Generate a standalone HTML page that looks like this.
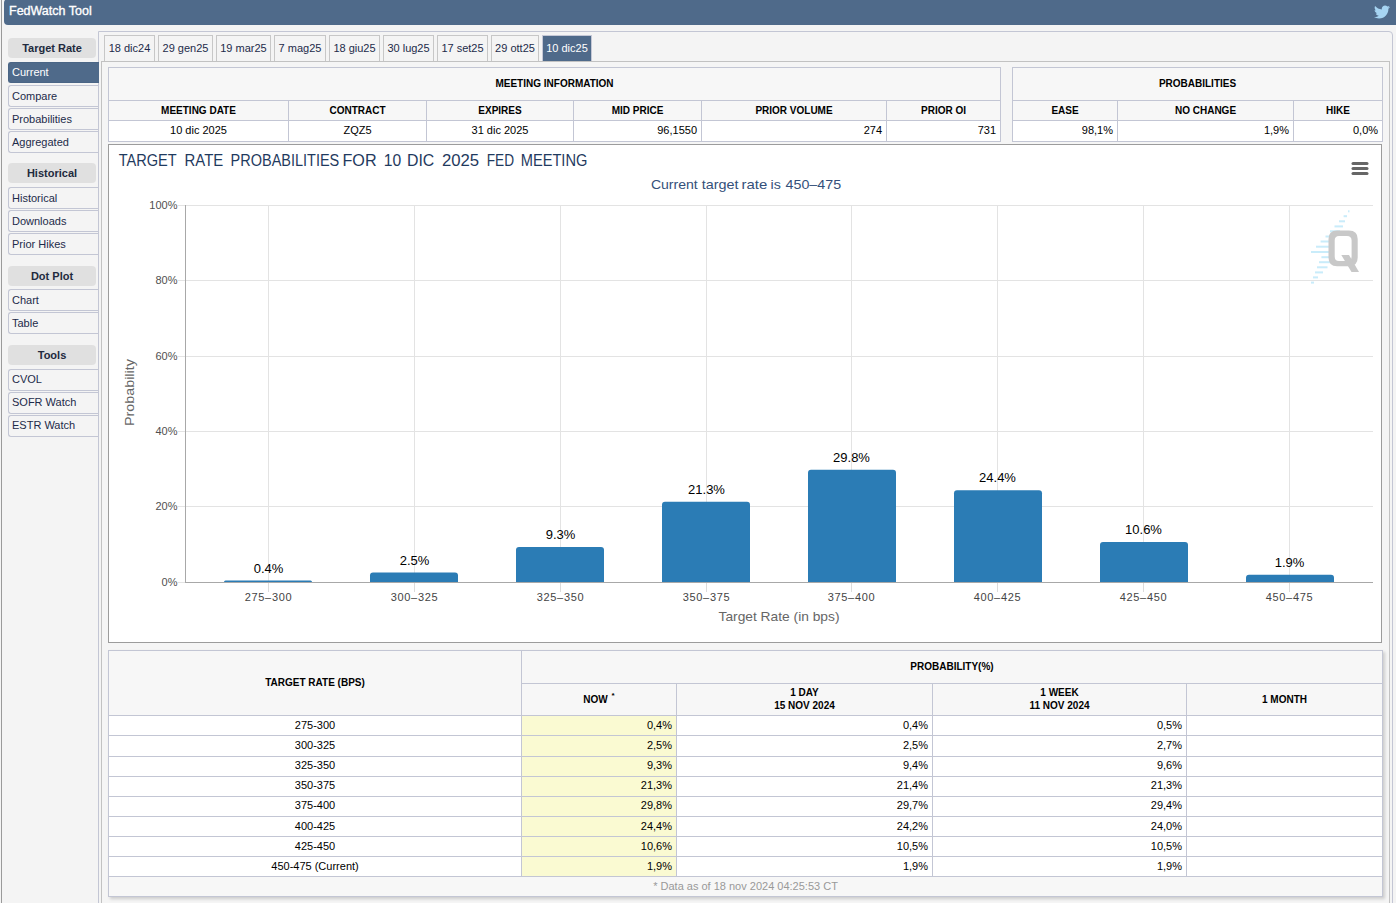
<!DOCTYPE html>
<html><head><meta charset="utf-8">
<style>
*{box-sizing:border-box;margin:0;padding:0}
html,body{width:1396px;height:903px;overflow:hidden;background:#f4f4f4;font-family:"Liberation Sans",sans-serif;position:relative}
.abs{position:absolute}
#lline{left:1px;top:0;width:1px;height:903px;background:#9a9a9a}
#hdr{left:4px;top:-1px;width:1396px;height:26px;background:#4f6a8a;border-radius:4px;color:#fff;font-size:12.5px;padding:5px 0 0 5px;-webkit-text-stroke:0.35px #fff}
#tw{left:1374px;top:3.5px}
/* sidebar */
.sh{position:absolute;left:8px;width:88px;height:20px;background:#e0e0e0;border-radius:4px;font-weight:bold;font-size:11px;color:#222a3e;text-align:center;line-height:20px}
.si{position:absolute;left:8px;width:91px;height:22px;background:#f4f4f4;border:1px solid #c3c6d4;border-right:none;border-radius:3px 0 0 3px;font-size:11px;color:#1d2b4a;padding-left:3px;line-height:20px}
.si.act{background:#4f6a8a;color:#fff;border-color:#4a6585;height:21px;line-height:19px;z-index:3;width:91px}
/* panel */
#outer{left:98px;top:31px;width:1295px;height:900px;border:1px solid #c3c6d4;border-radius:0 4px 0 0;background:#f4f4f4}
#inner{left:101px;top:61px;width:1289px;height:900px;border:1px solid #c2c2c2;background:#f5f5f5}
.tab{position:absolute;top:35px;height:26px;border:1px solid #c7c7c7;border-bottom:none;background:#f4f4f4;font-size:11px;color:#1d2b4a;text-align:center;line-height:25px}
.tab.act{background:#4f6a8a;color:#fff;border:1px solid #c5c8d6;border-bottom:none}
table{border-collapse:collapse;position:absolute;table-layout:fixed;background:#fff}
td,th{border:1px solid #c3c6d4;font-size:11px;color:#000;padding:0 4px;overflow:hidden;white-space:nowrap}
th{background:#f7f7f7;font-size:10px;font-weight:bold;text-align:center}
td{text-align:right;padding-bottom:2px}
td.c{text-align:center}
td.now{background:#fafad2}
th.two{line-height:12.6px}
th.now2{padding-bottom:4px}
th.t1{padding-bottom:2px}
tr.up td{padding-bottom:3px}
sup{font-size:8px;vertical-align:5px;margin-left:1px}
td.foot{background:#f7f7f7;color:#999;text-align:center}
#bt{box-shadow:2px 2px 3px rgba(0,0,0,.17)}
#chart{left:108px;top:144px;width:1274px;height:499px;border:1px solid #9c9c9c;background:#fff}
</style></head><body>
<div id="lline" class="abs"></div>
<div id="hdr" class="abs">FedWatch Tool</div>

<div class="sh" style="top:38px">Target Rate</div>
<div class="si act" style="top:62px">Current</div>
<div class="si" style="top:85px">Compare</div>
<div class="si" style="top:108px">Probabilities</div>
<div class="si" style="top:131px">Aggregated</div>
<div class="sh" style="top:163px">Historical</div>
<div class="si" style="top:187px">Historical</div>
<div class="si" style="top:210px">Downloads</div>
<div class="si" style="top:233px">Prior Hikes</div>
<div class="sh" style="top:266px">Dot Plot</div>
<div class="si" style="top:289px">Chart</div>
<div class="si" style="top:312px">Table</div>
<div class="sh" style="top:345px">Tools</div>
<div class="si" style="top:369px;line-height:18.5px">CVOL</div>
<div class="si" style="top:392px;line-height:18.5px">SOFR Watch</div>
<div class="si" style="top:415px;line-height:18.5px">ESTR Watch</div>

<div id="outer" class="abs"></div>
<div class="tab" style="left:104px;width:51px">18 dic24</div>
<div class="tab" style="left:158px;width:55px">29 gen25</div>
<div class="tab" style="left:216px;width:55px">19 mar25</div>
<div class="tab" style="left:274px;width:52px">7 mag25</div>
<div class="tab" style="left:329px;width:51px">18 giu25</div>
<div class="tab" style="left:383px;width:51px">30 lug25</div>
<div class="tab" style="left:437px;width:51px">17 set25</div>
<div class="tab" style="left:491px;width:48px">29 ott25</div>
<div class="tab act" style="left:542px;width:50px">10 dic25</div>
<div id="inner" class="abs"></div>

<!-- meeting info table -->
<table style="left:108px;top:67px;width:893px">
<colgroup><col style="width:180px"><col style="width:138px"><col style="width:147px"><col style="width:128px"><col style="width:185px"><col style="width:114px"></colgroup>
<tr style="height:33px"><th class="t1" colspan="6">MEETING INFORMATION</th></tr>
<tr style="height:20px"><th>MEETING DATE</th><th>CONTRACT</th><th>EXPIRES</th><th>MID PRICE</th><th>PRIOR VOLUME</th><th>PRIOR OI</th></tr>
<tr style="height:21px"><td class="c">10 dic 2025</td><td class="c">ZQZ5</td><td class="c">31 dic 2025</td><td>96,1550</td><td>274</td><td>731</td></tr>
</table>

<table style="left:1012px;top:67px;width:371px">
<colgroup><col style="width:105px"><col style="width:176px"><col style="width:89px"></colgroup>
<tr style="height:33px"><th class="t1" colspan="3">PROBABILITIES</th></tr>
<tr style="height:20px"><th>EASE</th><th>NO CHANGE</th><th>HIKE</th></tr>
<tr style="height:21px"><td>98,1%</td><td>1,9%</td><td>0,0%</td></tr>
</table>

<div id="chart" class="abs"></div>
<!--CHART-->
<svg class="abs" style="left:0;top:0;font-family:'Liberation Sans',sans-serif" width="1396" height="903">
<text x="118.7" y="166" fill="#1f3a5e" font-size="16" textLength="58.0" lengthAdjust="spacingAndGlyphs">TARGET</text>
<text x="184.6" y="166" fill="#1f3a5e" font-size="16" textLength="38.7" lengthAdjust="spacingAndGlyphs">RATE</text>
<text x="230.6" y="166" fill="#1f3a5e" font-size="16" textLength="108.7" lengthAdjust="spacingAndGlyphs">PROBABILITIES</text>
<text x="342.5" y="166" fill="#1f3a5e" font-size="16" textLength="34.1" lengthAdjust="spacingAndGlyphs">FOR</text>
<text x="383.7" y="166" fill="#1f3a5e" font-size="16" textLength="17.4" lengthAdjust="spacingAndGlyphs">10</text>
<text x="407.0" y="166" fill="#1f3a5e" font-size="16" textLength="27.3" lengthAdjust="spacingAndGlyphs">DIC</text>
<text x="441.9" y="166" fill="#1f3a5e" font-size="16" textLength="37.2" lengthAdjust="spacingAndGlyphs">2025</text>
<text x="486.7" y="166" fill="#1f3a5e" font-size="16" textLength="27.3" lengthAdjust="spacingAndGlyphs">FED</text>
<text x="520.7" y="166" fill="#1f3a5e" font-size="16" textLength="66.7" lengthAdjust="spacingAndGlyphs">MEETING</text>
<text x="650.9" y="188.6" fill="#34507a" font-size="13" textLength="46.9" lengthAdjust="spacingAndGlyphs">Current</text>
<text x="701.8" y="188.6" fill="#34507a" font-size="13" textLength="36.8" lengthAdjust="spacingAndGlyphs">target</text>
<text x="741.6" y="188.6" fill="#34507a" font-size="13" textLength="25.7" lengthAdjust="spacingAndGlyphs">rate</text>
<text x="770.6" y="188.6" fill="#34507a" font-size="13" textLength="10.3" lengthAdjust="spacingAndGlyphs">is</text>
<text x="785.6" y="188.6" fill="#34507a" font-size="13" textLength="55.5" lengthAdjust="spacingAndGlyphs">450–475</text>
<line x1="178" y1="205.5" x2="1373" y2="205.5" stroke="#e3e3e3"/>
<line x1="178" y1="280.5" x2="1373" y2="280.5" stroke="#e3e3e3"/>
<line x1="178" y1="356.5" x2="1373" y2="356.5" stroke="#e3e3e3"/>
<line x1="178" y1="431.5" x2="1373" y2="431.5" stroke="#e3e3e3"/>
<line x1="178" y1="506.5" x2="1373" y2="506.5" stroke="#e3e3e3"/>
<text x="177.5" y="208.8" fill="#505050" font-size="11" text-anchor="end">100%</text>
<text x="177.5" y="283.8" fill="#505050" font-size="11" text-anchor="end">80%</text>
<text x="177.5" y="359.8" fill="#505050" font-size="11" text-anchor="end">60%</text>
<text x="177.5" y="434.8" fill="#505050" font-size="11" text-anchor="end">40%</text>
<text x="177.5" y="509.8" fill="#505050" font-size="11" text-anchor="end">20%</text>
<text x="177.5" y="585.8" fill="#505050" font-size="11" text-anchor="end">0%</text>
<line x1="178" y1="582.5" x2="185" y2="582.5" stroke="#e3e3e3"/>
<line x1="268.5" y1="205" x2="268.5" y2="582" stroke="#e3e3e3"/>
<line x1="414.5" y1="205" x2="414.5" y2="582" stroke="#e3e3e3"/>
<line x1="560.5" y1="205" x2="560.5" y2="582" stroke="#e3e3e3"/>
<line x1="706.5" y1="205" x2="706.5" y2="582" stroke="#e3e3e3"/>
<line x1="851.5" y1="205" x2="851.5" y2="582" stroke="#e3e3e3"/>
<line x1="997.5" y1="205" x2="997.5" y2="582" stroke="#e3e3e3"/>
<line x1="1143.5" y1="205" x2="1143.5" y2="582" stroke="#e3e3e3"/>
<line x1="1289.5" y1="205" x2="1289.5" y2="582" stroke="#e3e3e3"/>
<line x1="268.5" y1="582" x2="268.5" y2="592" stroke="#dcdcdc"/>
<line x1="414.5" y1="582" x2="414.5" y2="592" stroke="#dcdcdc"/>
<line x1="560.5" y1="582" x2="560.5" y2="592" stroke="#dcdcdc"/>
<line x1="706.5" y1="582" x2="706.5" y2="592" stroke="#dcdcdc"/>
<line x1="851.5" y1="582" x2="851.5" y2="592" stroke="#dcdcdc"/>
<line x1="997.5" y1="582" x2="997.5" y2="592" stroke="#dcdcdc"/>
<line x1="1143.5" y1="582" x2="1143.5" y2="592" stroke="#dcdcdc"/>
<line x1="1289.5" y1="582" x2="1289.5" y2="592" stroke="#dcdcdc"/>
<line x1="185.5" y1="205" x2="185.5" y2="582" stroke="#a8a8a8"/>
<path d="M224 582 V582.00 Q224 580.49 225.506 580.49 H310.494 Q312 580.49 312 582.00 V582 Z" fill="#2b7cb5"/>
<text x="268.5" y="572.5" fill="#000" font-size="13" text-anchor="middle">0.4%</text>
<text x="268.5" y="601" fill="#444" font-size="11" letter-spacing="0.7" text-anchor="middle">275–300</text>
<path d="M370 582 V575.59 Q370 572.59 373 572.59 H455 Q458 572.59 458 575.59 V582 Z" fill="#2b7cb5"/>
<text x="414.5" y="564.6" fill="#000" font-size="13" text-anchor="middle">2.5%</text>
<text x="414.5" y="601" fill="#444" font-size="11" letter-spacing="0.7" text-anchor="middle">300–325</text>
<path d="M516 582 V549.99 Q516 546.99 519 546.99 H601 Q604 546.99 604 549.99 V582 Z" fill="#2b7cb5"/>
<text x="560.5" y="539.0" fill="#000" font-size="13" text-anchor="middle">9.3%</text>
<text x="560.5" y="601" fill="#444" font-size="11" letter-spacing="0.7" text-anchor="middle">325–350</text>
<path d="M662 582 V504.81 Q662 501.81 665 501.81 H747 Q750 501.81 750 504.81 V582 Z" fill="#2b7cb5"/>
<text x="706.5" y="493.8" fill="#000" font-size="13" text-anchor="middle">21.3%</text>
<text x="706.5" y="601" fill="#444" font-size="11" letter-spacing="0.7" text-anchor="middle">350–375</text>
<path d="M808 582 V472.80 Q808 469.80 811 469.80 H893 Q896 469.80 896 472.80 V582 Z" fill="#2b7cb5"/>
<text x="851.5" y="461.8" fill="#000" font-size="13" text-anchor="middle">29.8%</text>
<text x="851.5" y="601" fill="#444" font-size="11" letter-spacing="0.7" text-anchor="middle">375–400</text>
<path d="M954 582 V493.13 Q954 490.13 957 490.13 H1039 Q1042 490.13 1042 493.13 V582 Z" fill="#2b7cb5"/>
<text x="997.5" y="482.1" fill="#000" font-size="13" text-anchor="middle">24.4%</text>
<text x="997.5" y="601" fill="#444" font-size="11" letter-spacing="0.7" text-anchor="middle">400–425</text>
<path d="M1100 582 V545.09 Q1100 542.09 1103 542.09 H1185 Q1188 542.09 1188 545.09 V582 Z" fill="#2b7cb5"/>
<text x="1143.5" y="534.1" fill="#000" font-size="13" text-anchor="middle">10.6%</text>
<text x="1143.5" y="601" fill="#444" font-size="11" letter-spacing="0.7" text-anchor="middle">425–450</text>
<path d="M1246 582 V577.85 Q1246 574.85 1249 574.85 H1331 Q1334 574.85 1334 577.85 V582 Z" fill="#2b7cb5"/>
<text x="1289.5" y="566.8" fill="#000" font-size="13" text-anchor="middle">1.9%</text>
<text x="1289.5" y="601" fill="#444" font-size="11" letter-spacing="0.7" text-anchor="middle">450–475</text>
<line x1="185" y1="582.5" x2="1373" y2="582.5" stroke="#a8a8a8"/>
<text x="779" y="620.5" fill="#666" font-size="13.5" textLength="121" lengthAdjust="spacingAndGlyphs" text-anchor="middle">Target Rate (in bps)</text>
<text transform="translate(134.3 392.6) rotate(-90)" fill="#666" font-size="13.5" textLength="67" lengthAdjust="spacingAndGlyphs" text-anchor="middle">Probability</text>
<line x1="1353" y1="163.5" x2="1367" y2="163.5" stroke="#666" stroke-width="3" stroke-linecap="round"/>
<line x1="1353" y1="168.5" x2="1367" y2="168.5" stroke="#666" stroke-width="3" stroke-linecap="round"/>
<line x1="1353" y1="173.5" x2="1367" y2="173.5" stroke="#666" stroke-width="3" stroke-linecap="round"/>
<rect x="1348" y="210.3" width="1.5" height="2" fill="#c9ecfa"/>
<rect x="1343.6" y="215.2" width="3.400000000000091" height="2" fill="#c9ecfa"/>
<rect x="1339" y="220.3" width="6" height="2" fill="#c9ecfa"/>
<rect x="1334.5" y="225.4" width="8.5" height="2" fill="#c9ecfa"/>
<rect x="1330" y="230.3" width="10" height="2" fill="#c9ecfa"/>
<rect x="1325.5" y="235.5" width="5.5" height="2" fill="#c9ecfa"/>
<rect x="1320.6" y="240.5" width="10.400000000000091" height="2" fill="#c9ecfa"/>
<rect x="1316" y="245.7" width="15" height="2" fill="#c9ecfa"/>
<rect x="1311" y="251" width="20" height="2" fill="#c9ecfa"/>
<rect x="1321.4" y="256.2" width="9.599999999999909" height="2" fill="#c9ecfa"/>
<rect x="1319" y="261.2" width="12" height="2" fill="#c9ecfa"/>
<rect x="1317" y="266.3" width="10.5" height="2" fill="#c9ecfa"/>
<rect x="1315" y="271.4" width="8" height="2" fill="#c9ecfa"/>
<rect x="1313" y="276.4" width="5" height="2" fill="#c9ecfa"/>
<rect x="1311" y="281.6" width="3" height="2" fill="#c9ecfa"/>
<path fill="#c8c8c8" fill-rule="evenodd" d="M1337 230.5 H1349 Q1357.7 230.5 1357.7 239 V257.5 Q1357.7 266.2 1349 266.2 H1337 Q1328.5 266.2 1328.5 257.5 V239 Q1328.5 230.5 1337 230.5 Z M1339 236 Q1334.7 236 1334.7 240.5 V256.5 Q1334.7 261 1339 261 H1347 Q1351.6 261 1351.6 256.5 V240.5 Q1351.6 236 1347 236 Z"/>
<path fill="#c8c8c8" d="M1341.3 255 H1349 L1359 271.9 H1351.5 Z"/>
</svg>
<!--/CHART-->
<table id="bt" style="left:108px;top:650px;width:1274px">
<colgroup><col style="width:413px"><col style="width:155px"><col style="width:256px"><col style="width:254px"><col style="width:196px"></colgroup>
<tr style="height:33px"><th class="t1" rowspan="2">TARGET RATE (BPS)</th><th class="t1" colspan="4">PROBABILITY(%)</th></tr>
<tr style="height:32px"><th class="now2">NOW <sup>*</sup></th><th class="two">1 DAY<br>15 NOV 2024</th><th class="two">1 WEEK<br>11 NOV 2024</th><th>1 MONTH</th></tr>
<tr style="height:20px"><td class="c">275-300</td><td class="now">0,4%</td><td>0,4%</td><td>0,5%</td><td></td></tr>
<tr style="height:21px"><td class="c">300-325</td><td class="now">2,5%</td><td>2,5%</td><td>2,7%</td><td></td></tr>
<tr class="up" style="height:20px"><td class="c">325-350</td><td class="now">9,3%</td><td>9,4%</td><td>9,6%</td><td></td></tr>
<tr class="up" style="height:20px"><td class="c">350-375</td><td class="now">21,3%</td><td>21,4%</td><td>21,3%</td><td></td></tr>
<tr class="up" style="height:20px"><td class="c">375-400</td><td class="now">29,8%</td><td>29,7%</td><td>29,4%</td><td></td></tr>
<tr style="height:20px"><td class="c">400-425</td><td class="now">24,4%</td><td>24,2%</td><td>24,0%</td><td></td></tr>
<tr style="height:20px"><td class="c">425-450</td><td class="now">10,6%</td><td>10,5%</td><td>10,5%</td><td></td></tr>
<tr style="height:20px"><td class="c">450-475 (Current)</td><td class="now">1,9%</td><td>1,9%</td><td>1,9%</td><td></td></tr>
<tr style="height:20px"><td colspan="5" class="foot">* Data as of 18 nov 2024 04:25:53 CT</td></tr>
</table>
<svg id="tw" class="abs" viewBox="0 0 24 24" width="16" height="16"><path fill="#a6d4f2" d="M23.954 4.569c-.885.389-1.83.654-2.825.775 1.014-.611 1.794-1.574 2.163-2.723-.951.555-2.005.959-3.127 1.184-.896-.959-2.173-1.559-3.591-1.559-2.717 0-4.92 2.203-4.92 4.917 0 .39.045.765.127 1.124C7.691 8.094 4.066 6.13 1.64 3.161c-.427.722-.666 1.561-.666 2.475 0 1.71.87 3.213 2.188 4.096-.807-.026-1.566-.248-2.228-.616v.061c0 2.385 1.693 4.374 3.946 4.827-.413.111-.849.171-1.296.171-.314 0-.615-.03-.916-.086.631 1.953 2.445 3.377 4.604 3.417-1.68 1.319-3.809 2.105-6.102 2.105-.39 0-.779-.023-1.17-.067 2.189 1.394 4.768 2.209 7.557 2.209 9.054 0 13.999-7.496 13.999-13.986 0-.209 0-.42-.015-.63.961-.689 1.8-1.56 2.46-2.548l-.047-.02z"/></svg>

</body></html>
